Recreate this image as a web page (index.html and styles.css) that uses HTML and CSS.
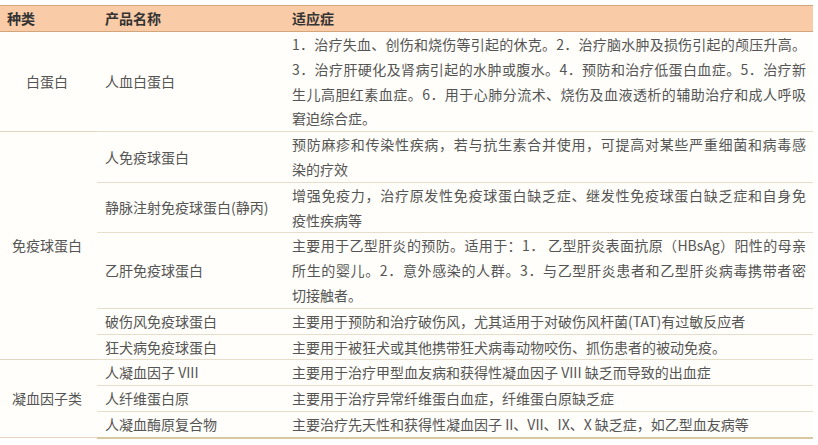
FILE: index.html
```html
<!DOCTYPE html>
<html lang="zh">
<head>
<meta charset="utf-8">
<title>血液制品适应症</title>
<link rel="stylesheet" href="styles.css">
</head>
<body>
<div class="page">
<table class="drug-table">
  <colgroup>
    <col class="c-kind">
    <col class="c-name">
    <col class="c-use">
  </colgroup>
  <thead>
    <tr>
      <th class="h-kind">种类</th>
      <th class="h-name">产品名称</th>
      <th class="h-use">适应症</th>
    </tr>
  </thead>
  <tbody>
    <tr>
      <td class="kind">白蛋白</td>
      <td class="name">人血白蛋白</td>
      <td class="use">
        <span class="ln">1．治疗失血、创伤和烧伤等引起的休克。2．治疗脑水肿及损伤引起的颅压升高。</span>
        <span class="ln">3．治疗肝硬化及肾病引起的水肿或腹水。4．预防和治疗低蛋白血症。5．治疗新</span>
        <span class="ln">生儿高胆红素血症。6．用于心肺分流术、烧伤及血液透析的辅助治疗和成人呼吸</span>
        <span class="last">窘迫综合症。</span>
      </td>
    </tr>
    <tr>
      <td class="kind" rowspan="5">免疫球蛋白</td>
      <td class="name">人免疫球蛋白</td>
      <td class="use">
        <span class="ln">预防麻疹和传染性疾病，若与抗生素合并使用，可提高对某些严重细菌和病毒感</span>
        <span class="last">染的疗效</span>
      </td>
    </tr>
    <tr>
      <td class="name">静脉注射免疫球蛋白(静丙)</td>
      <td class="use">
        <span class="ln">增强免疫力，治疗原发性免疫球蛋白缺乏症、继发性免疫球蛋白缺乏症和自身免</span>
        <span class="last">疫性疾病等</span>
      </td>
    </tr>
    <tr>
      <td class="name">乙肝免疫球蛋白</td>
      <td class="use">
        <span class="ln">主要用于乙型肝炎的预防。适用于：1． 乙型肝炎表面抗原（HBsAg）阳性的母亲</span>
        <span class="ln">所生的婴儿。2．意外感染的人群。3．与乙型肝炎患者和乙型肝炎病毒携带者密</span>
        <span class="last">切接触者。</span>
      </td>
    </tr>
    <tr>
      <td class="name">破伤风免疫球蛋白</td>
      <td class="use">主要用于预防和治疗破伤风，尤其适用于对破伤风杆菌(TAT)有过敏反应者</td>
    </tr>
    <tr>
      <td class="name">狂犬病免疫球蛋白</td>
      <td class="use">主要用于被狂犬或其他携带狂犬病毒动物咬伤、抓伤患者的被动免疫。</td>
    </tr>
    <tr>
      <td class="kind" rowspan="3">凝血因子类</td>
      <td class="name">人凝血因子 VIII</td>
      <td class="use">主要用于治疗甲型血友病和获得性凝血因子 VIII 缺乏而导致的出血症</td>
    </tr>
    <tr>
      <td class="name">人纤维蛋白原</td>
      <td class="use">主要用于治疗异常纤维蛋白血症，纤维蛋白原缺乏症</td>
    </tr>
    <tr class="end">
      <td class="name">人凝血酶原复合物</td>
      <td class="use">主要治疗先天性和获得性凝血因子 II、VII、IX、X 缺乏症，如乙型血友病等</td>
    </tr>
  </tbody>
</table>
</div>
</body>
</html>
```
FILE: styles.css
```css
html, body {
  margin: 0;
  padding: 0;
  background: #ffffff;
}
.page {
  padding: 5px 5px 0 0;
}
.drug-table {
  width: 813px;
  table-layout: fixed;
  border-collapse: collapse;
  font-family: "Noto Sans CJK SC", "Noto Sans", sans-serif;
  font-size: 14px;
  color: #555555;
  background: #fffefa;
}
.c-kind { width: 97px; }
.c-name { width: 187px; }
.c-use { width: 529px; }
th {
  background: #f9cba7;
  color: #333333;
  font-weight: bold;
  text-align: left;
  line-height: 25px;
  padding: 0 8px;
  border-top: 1px solid #d3a57a;
  border-bottom: 1px solid #d3a57a;
}
th.h-kind { padding-left: 7px; }
td {
  line-height: 24.8px;
  padding: 0 7px 0 8px;
  vertical-align: middle;
  border-bottom: 1px solid #e6ddcb;
}
td.kind {
  text-align: center;
  padding: 0 10px 0 7px;
  border-bottom: 1px solid #e2d6c0;
}
td.use .ln {
  display: block;
  text-align: justify;
  text-align-last: justify;
}
td.use .last {
  display: block;
}
tbody tr:last-child td {
  border-bottom: 2px solid #d9c7a0;
}
```
